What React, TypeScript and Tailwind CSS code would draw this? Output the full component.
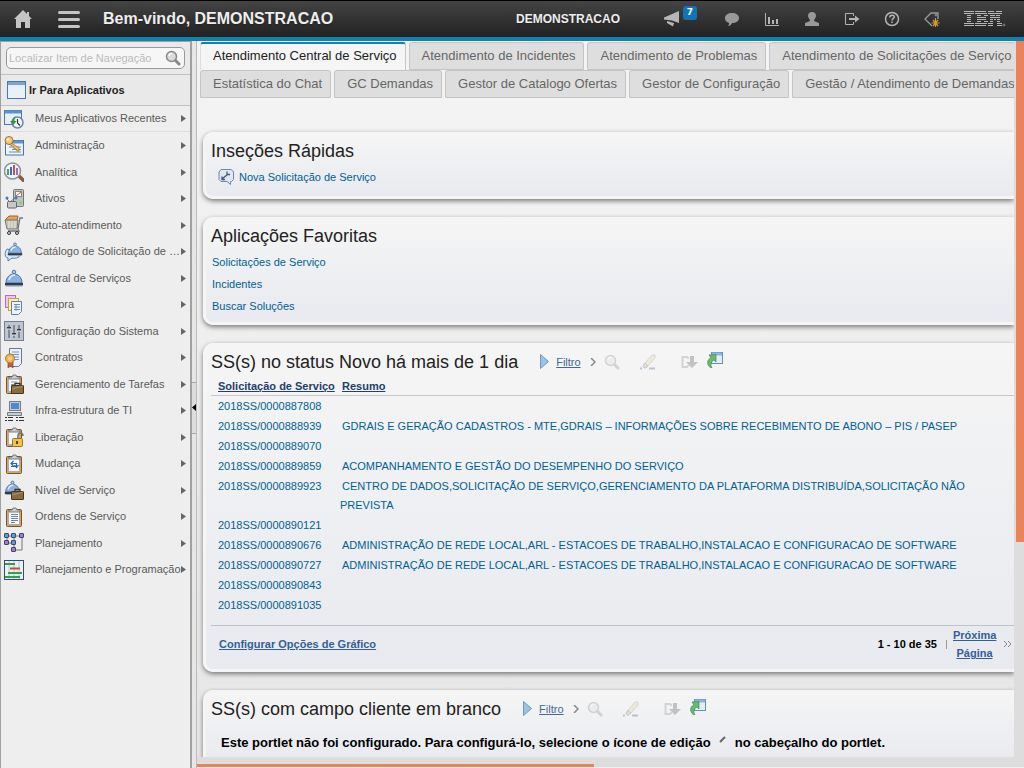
import React, { useState } from "react";

const navItems = [
  { icon: "recent", label: "Meus Aplicativos Recentes" },
  { icon: "admin", label: "Administração" },
  { icon: "analytics", label: "Analítica" },
  { icon: "assets", label: "Ativos" },
  { icon: "cart", label: "Auto-atendimento" },
  { icon: "catalog", label: "Catálogo de Solicitação de …" },
  { icon: "bell", label: "Central de Serviços" },
  { icon: "purchase", label: "Compra" },
  { icon: "config", label: "Configuração do Sistema" },
  { icon: "contract", label: "Contratos" },
  { icon: "tasks", label: "Gerenciamento de Tarefas" },
  { icon: "infra", label: "Infra-estrutura de TI" },
  { icon: "release", label: "Liberação" },
  { icon: "change", label: "Mudança" },
  { icon: "level", label: "Nível de Serviço" },
  { icon: "orders", label: "Ordens de Serviço" },
  { icon: "planning", label: "Planejamento" },
  { icon: "schedule", label: "Planejamento e Programação" },
];

const tabRows = [
  [
    "Atendimento Central de Serviço",
    "Atendimento de Incidentes",
    "Atendimento de Problemas",
    "Atendimento de Solicitações de Serviço",
  ],
  [
    "Estatística do Chat",
    "GC Demandas",
    "Gestor de Catalogo Ofertas",
    "Gestor de Configuração",
    "Gestão / Atendimento de Demandas",
  ],
];

const requests = [
  { id: "2018SS/0000887808", resumo: "" },
  {
    id: "2018SS/0000888939",
    resumo:
      "GDRAIS E GERAÇÃO CADASTROS - MTE,GDRAIS – INFORMAÇÕES SOBRE RECEBIMENTO DE ABONO – PIS / PASEP",
  },
  { id: "2018SS/0000889070", resumo: "" },
  {
    id: "2018SS/0000889859",
    resumo: "ACOMPANHAMENTO E GESTÃO DO DESEMPENHO DO SERVIÇO",
  },
  {
    id: "2018SS/0000889923",
    resumo:
      "CENTRO DE DADOS,SOLICITAÇÃO DE SERVIÇO,GERENCIAMENTO DA PLATAFORMA DISTRIBUÍDA,SOLICITAÇÃO NÃO PREVISTA",
  },
  { id: "2018SS/0000890121", resumo: "" },
  {
    id: "2018SS/0000890676",
    resumo:
      "ADMINISTRAÇÃO DE REDE LOCAL,ARL - ESTACOES DE TRABALHO,INSTALACAO E CONFIGURACAO DE SOFTWARE",
  },
  {
    id: "2018SS/0000890727",
    resumo:
      "ADMINISTRAÇÃO DE REDE LOCAL,ARL - ESTACOES DE TRABALHO,INSTALACAO E CONFIGURACAO DE SOFTWARE",
  },
  { id: "2018SS/0000890843", resumo: "" },
  { id: "2018SS/0000891035", resumo: "" },
];

// shared pieces of the sidebar icons
const clipboard = (
  <>
    <rect x="2.5" y="2.5" width="15" height="17" rx="1" fill="#d9a35c" stroke="#7b5326" />
    <rect x="4.5" y="4.5" width="11" height="13" fill="#f4f7fb" stroke="#a8adb8" />
    <path d="M5 5V3h3l1-2h3l1 2h3v2z" fill="#c9ccd0" stroke="#666" strokeWidth="0.8" />
  </>
);
const briefcase = (
  <>
    <path d="M11 12V9.500h5V12" fill="none" stroke="#3f2f1c" strokeWidth="1.3" />
    <rect x="7.500" y="11.500" width="12" height="8" rx="0.500" fill="#8b6b41" stroke="#49351c" />
    <path d="M8 15l11-3" stroke="#b39465" />
  </>
);
const bell = (
  <>
    <circle cx="10" cy="3" r="1.800" fill="#aac7ec" stroke="#3d5e96" strokeWidth="0.800" />
    <path d="M2 14c0-12 16-12 16 0z" fill="#8bb2e0" stroke="#4a6ea5" />
    <path d="M5 11c1-4 3-5 6-5" stroke="#e6f1fd" strokeWidth="1.600" fill="none" />
    <path d="M1 14h18v2.500H1z" fill="#323c49" />
    <path d="M2 17h16" stroke="#8794a8" />
  </>
);

const navIcons: Record<string, React.ReactNode> = {
  recent: (
    <>
      <rect x="0.5" y="1.5" width="17" height="14" fill="#e6effa" stroke="#4f78b4" />
      <path d="M1 3h16" stroke="#5d92d2" strokeWidth="3" />
      <circle cx="13.500" cy="13.500" r="5.500" fill="#f3f7fb" stroke="#6c88ae" strokeWidth="1.500" />
      <path d="M13.500 10v4l2.500 2.500" fill="none" stroke="#333" strokeWidth="1.200" />
      <path d="M12 7c-3 1-3.500 3-3.500 5H6l3.500 4 3-4h-2c0-2 0-3 1.500-5z" fill="#2c9a3d" />
    </>
  ),
  admin: (
    <>
      <rect x="1.500" y="4.500" width="18" height="14.500" fill="#edf3fb" stroke="#4a74ad" />
      <path d="M2 6h17" stroke="#5f92d0" strokeWidth="3" />
      <path d="M5 11h12M8 13.500h9M5 16h12" stroke="#6d8fbd" />
      <path d="M6 6l9 6 0 3-2 0-1-2-2-.5-.5-2-4-2z" fill="#f2bf62" stroke="#a5712a" strokeWidth="0.800" />
      <circle cx="5" cy="4.500" r="4" fill="#f4c873" stroke="#a5712a" />
      <circle cx="4" cy="3.500" r="1.200" fill="#fff" />
    </>
  ),
  analytics: (
    <>
      <path d="M15 14l5 5" stroke="#8b5b3c" strokeWidth="3.500" strokeLinecap="round" />
      <circle cx="8.500" cy="9" r="8" fill="#edf5fd" stroke="#8b919b" strokeWidth="1.500" />
      <path d="M4 7v6" stroke="#48a06b" strokeWidth="2" />
      <path d="M7 5v8" stroke="#4a64b5" strokeWidth="2" />
      <path d="M10 3v10" stroke="#c34e61" strokeWidth="2" />
      <path d="M13 6v7" stroke="#a36dcc" strokeWidth="2" />
    </>
  ),
  assets: (
    <>
      <rect x="9.500" y="0.500" width="10" height="17" rx="1" fill="#bfc2c4" stroke="#777" />
      <rect x="11.500" y="2.500" width="6" height="5" fill="#f7f7f7" stroke="#888" />
      <path d="M12 7l5-4" stroke="#d04f43" />
      <circle cx="16.500" cy="13.500" r="1.500" fill="#79d65b" />
      <path d="M2 9l4 4 6-5" fill="none" stroke="#777" />
      <circle cx="3" cy="9" r="1.500" fill="#3b79cc" />
      <circle cx="12" cy="9" r="1.500" fill="#3b79cc" />
      <rect x="3.500" y="12.500" width="9" height="6.500" rx="1" fill="#c8c8c8" stroke="#666" />
    </>
  ),
  cart: (
    <>
      <path d="M2 4l3-3h9l-1 5H2z" fill="#e5a65b" stroke="#9b642a" />
      <path d="M1 5h13l-1 9H3z" fill="#c5c3b9" stroke="#77756c" />
      <path d="M5 6v7M8 6v7M11 6v7" stroke="#eeeade" />
      <path d="M19 3h-3l-2 11 1 2H4" fill="none" stroke="#6f7580" strokeWidth="1.300" />
      <circle cx="5" cy="18" r="1.500" fill="#ddd" stroke="#333" />
      <circle cx="13" cy="18" r="1.500" fill="#ddd" stroke="#333" />
    </>
  ),
  catalog: (
    <>
      <path d="M3 7c-3 4-2 9 1 9v3l4-3c4 1 9-1 9-5z" fill="#dbe9fa" stroke="#5d7fae" />
      <g transform="translate(3 0) scale(0.800)">{bell}</g>
    </>
  ),
  bell: <g transform="translate(0 1)">{bell}</g>,
  purchase: (
    <>
      <rect x="1.500" y="0.500" width="10" height="12" fill="#eac7f1" stroke="#b76cc5" />
      <rect x="4.500" y="3.500" width="10" height="12" fill="#fcefb4" stroke="#c9a339" />
      <path d="M7.500 6.500h10v10l-3 3h-7z" fill="#edf4fd" stroke="#617fa8" />
      <path d="M10 9.500h6M10 12h6M10 14.500h6M12 9v7" stroke="#718eb6" />
    </>
  ),
  config: (
    <>
      <rect x="0.500" y="0.500" width="19" height="19" fill="#bfc6d2" stroke="#737e90" />
      <path d="M5 4v13M10 4v13M15 4v13" stroke="#444d59" />
      <path d="M3 7h4M8 13h4M13 9h4" stroke="#303845" strokeWidth="2" />
      <path d="M3 8h4M8 14h4M13 10h4" stroke="#e7ebf2" />
    </>
  ),
  contract: (
    <>
      <path d="M5.500.5h12v15l-3 3h-9z" fill="#eaf1fb" stroke="#6179a2" />
      <path d="M8 4h7M8 6.500h7M10 9h5M11 11.500h4" stroke="#7d94b8" />
      <path d="M4 13v7l2.500-2L9 20v-7z" fill="#bd6045" stroke="#8c3f2b" strokeWidth="0.700" />
      <circle cx="6" cy="10.500" r="4.500" fill="#f0b553" stroke="#ad7523" />
      <circle cx="6" cy="10.500" r="2" fill="#f9d68c" />
    </>
  ),
  tasks: (
    <>
      {clipboard}
      <path d="M7 8h6M7 10.500h4" stroke="#8090a5" />
      {briefcase}
    </>
  ),
  infra: (
    <>
      <rect x="5.500" y="0.500" width="11" height="9" fill="#c7ccd2" stroke="#727a86" />
      <rect x="7" y="2" width="8" height="6" fill="#4989d8" />
      <path d="M3.500 11.500h14v3h-14z" fill="#c9cdd2" stroke="#727a86" />
      <path d="M1 16.500h2M4 16.500h5M12 16.500h2M15 16.500h5M1 19.500h2M4 19.500h5M12 19.500h2M15 19.500h5" stroke="#333" />
    </>
  ),
  release: (
    <>
      {clipboard}
      <path d="M14 12V9c0-4 5-4 5 0" fill="none" stroke="#777" strokeWidth="1.600" />
      <rect x="8.500" y="11.500" width="10" height="8" rx="1" fill="#f1c44d" stroke="#9d731b" />
      <path d="M13 14v3" stroke="#58400f" strokeWidth="2" />
    </>
  ),
  change: (
    <>
      {clipboard}
      <path d="M12.500 14V9.500h-5M9.500 7L7 9.500 9.500 12M7 12.500h4M10.500 11l2 2.500 2-2.500" fill="none" stroke="#28679e" strokeWidth="1.200" />
    </>
  ),
  level: (
    <>
      <g transform="scale(0.850)">{bell}</g>
      {briefcase}
    </>
  ),
  orders: (
    <>
      {clipboard}
      <path d="M7 7.500h7M7 9.500h7M7 11.500h7M7 13.500h7M7 15.500h4" stroke="#74849d" />
    </>
  ),
  planning: (
    <>
      <path d="M3 3h15v14h-8V3M3 3v7h7" fill="none" stroke="#777" />
      {[
        [0.500, 0.500, "#54a0d7"],
        [7.500, 0.500, "#54a0d7"],
        [15.500, 0.500, "#ad74d0"],
        [0.500, 7.500, "#ad74d0"],
        [7.500, 7.500, "#54a0d7"],
        [7.500, 14.500, "#ad74d0"],
      ].map(([x, y, c], i) => (
        <rect key={i} x={x} y={y} width="4" height="4" rx="0.500" fill={String(c)} stroke="#3f4670" />
      ))}
    </>
  ),
  schedule: (
    <>
      <rect x="0.500" y="0.500" width="19" height="19" fill="#eaf1f5" stroke="#334b76" />
      <path d="M5 1v18M10 1v18M15 1v18" stroke="#b8c6d2" />
      <path d="M1 4h10M4 13h14M1 17h15" stroke="#3d9a4d" strokeWidth="2" />
      <path d="M6 8.500h10" stroke="#c25035" strokeWidth="2" />
    </>
  ),
};

// [row, start, width] of each stripe
const ibmStripes = [
  [0, 0, 10], [1, 0, 10], [2, 3, 4], [3, 3, 4], [4, 3, 4], [5, 3, 4], [6, 0, 10], [7, 0, 10],
  [0, 11, 11], [1, 11, 12], [2, 13, 4], [2, 20, 4], [3, 13, 9], [4, 13, 9], [5, 13, 4], [5, 20, 4], [6, 11, 12], [7, 11, 11],
  [0, 24, 6], [0, 32, 6], [1, 24, 7], [1, 31, 7], [2, 26, 5], [2, 32, 4], [3, 26, 10], [4, 26, 3], [4, 30, 2], [4, 33, 3],
  [5, 26, 3], [5, 33, 3], [6, 24, 5], [6, 33, 5], [7, 24, 5], [7, 33, 5],
];

function SearchIcon({ className }: { className: string }) {
  return (
    <svg className={className} viewBox="0 0 16 16" aria-hidden="true">
      <path d="M10 10l4 4" stroke="#888" strokeWidth="3" strokeLinecap="round" />
      <circle cx="6.500" cy="6.500" r="5" fill="#d9dcde" stroke="#888" strokeWidth="1.500" />
      <path d="M4 6c0-2 1-2.500 3-2.500" stroke="#fff" strokeWidth="1.200" fill="none" />
    </svg>
  );
}

function HeaderButton({ label, children }: { label: string; children: React.ReactNode }) {
  return (
    <button type="button" aria-label={label} className="flex w-10 justify-center">
      <svg className="h-4 w-4" viewBox="0 0 16 16" fill="none" stroke="#b5b5b5">
        {children}
      </svg>
    </button>
  );
}

function Header() {
  return (
    <header className="flex h-[41px] shrink-0 items-center border-t border-b-4 border-t-black border-b-[#0b83b8] bg-linear-to-b from-[#444] to-[#222] text-[#eee]">
      <button type="button" aria-label="Início" className="ml-3.5">
        <svg className="h-[18px] w-[18px]" viewBox="0 0 18 18" fill="#c4c4c4">
          <path d="M9 0L0 9h2v9h5v-6h4v6h5V9h2l-3-3V2h-2v2z" />
        </svg>
      </button>
      <button type="button" aria-label="Menu" className="ml-[26px] flex w-[22px] flex-col gap-1">
        <span className="h-[3px] rounded-sm bg-[#c4c4c4]" />
        <span className="h-[3px] rounded-sm bg-[#c4c4c4]" />
        <span className="h-[3px] rounded-sm bg-[#c4c4c4]" />
      </button>
      <h1 className="ml-[23px] text-[16px] font-bold text-shadow-sm">Bem-vindo, DEMONSTRACAO</h1>
      <span className="ml-auto text-[12px] font-bold text-shadow-sm">DEMONSTRACAO</span>
      <button type="button" aria-label="Avisos" className="relative mr-8 ml-11">
        <svg className="h-4 w-4" viewBox="0 0 16 16" fill="#b5b5b5">
          <path d="M15 0v12L8 9.500 0 8.500V6.500z" />
          <path d="M3 10l7 2-1 3.500L3 12z" />
        </svg>
        <span className="absolute -top-[5px] left-[19px] flex h-[14px] w-[14px] items-center justify-center rounded-[3px] bg-[#1273b5] font-['DejaVu_Sans'] text-[9px] font-bold text-white">
          7
        </span>
      </button>
      <HeaderButton label="Chat">
        <path d="M8 2c4 0 7 2 7 5s-3 5-7 5c-1 2-2 3-4 3 1-1 1-2 1-3-3-1-4-3-4-5 0-3 3-5 7-5z" fill="#999" stroke="none" />
      </HeaderButton>
      <HeaderButton label="Gráficos">
        <path d="M1.500 2v12.500H15" />
        <path d="M5 6v7M9 9v4M13 8v5" strokeWidth="2" />
      </HeaderButton>
      <HeaderButton label="Perfil">
        <path d="M8 1c3 0 4 2 4 4 0 2-2 3-2 5l5 2v3H1v-3l5-2c0-2-2-3-2-5 0-2 1-4 4-4z" fill="#999" stroke="none" />
      </HeaderButton>
      <HeaderButton label="Sair">
        <path d="M9.500 5V2.500h-8v11h8V11" />
        <path d="M5 8h7" strokeWidth="2" />
        <path d="M11 4.500L15.500 8 11 11.500z" fill="#b5b5b5" stroke="none" />
      </HeaderButton>
      <HeaderButton label="Ajuda">
        <circle cx="8" cy="8" r="6.500" strokeWidth="1.500" />
        <path d="M5.800 6.500c0-3 4.500-3 4.500-.5 0 1.500-2.300 1.500-2.300 3.500M8 10.500v1.500" strokeWidth="1.500" />
      </HeaderButton>
      <HeaderButton label="Etiquetas">
        <path d="M8 15L1 8l6-6h7v6" stroke="#999" strokeWidth="1.300" />
        <circle cx="12" cy="4" r="1" stroke="#999" />
        <path d="M11.500 7v9M7.500 12h8M9 9l5 6M14 9l-5 6" stroke="#d39a2c" strokeWidth="1.200" />
      </HeaderButton>
      <svg className="mr-[18px] ml-3 h-4 w-[42px]" viewBox="0 0 42 16" fill="#b5b5b5" role="img" aria-label="IBM">
        {ibmStripes.map(([row, x, w]) => (
          <rect key={`${row}-${x}`} x={x} y={row * 2} width={w} height="1" />
        ))}
        <circle cx="40" cy="14" r="1" fill="none" stroke="#999" strokeWidth="0.700" />
      </svg>
    </header>
  );
}

function Sidebar() {
  const [search, setSearch] = useState("");

  return (
    <aside className="w-[192px] shrink-0 border-t border-r-2 border-l border-[#a0a0a0] bg-[#eee]">
      <div className="flex h-8 items-center bg-[#e9e9e9] px-[5px]">
        <label className="flex h-[22px] w-full items-center rounded-[5px] border border-[#999] bg-[#f6f6f6] pr-[3px] pl-[2px]">
          <input
            aria-label="Localizar Item de Navegação"
            className="min-w-0 flex-1 bg-transparent text-[11px] outline-none placeholder:text-[#bbb]"
            placeholder="Localizar Item de Navegação"
            value={search}
            onChange={(e) => setSearch(e.target.value)}
          />
          <SearchIcon className="h-4 w-4" />
        </label>
      </div>
      <button
        type="button"
        className="flex h-8 w-full items-center gap-[3px] border-y border-[#c2c2c2] bg-[#e9e9e9] pl-[6px] text-[11px] font-bold text-[#222]"
      >
        <svg className="h-[18px] w-[19px]" viewBox="0 0 19 18">
          <rect x="0.500" y="0.500" width="18" height="17" fill="#e8f0f9" stroke="#4c76ae" />
          <path d="M1 2.500h17" stroke="#75a7df" strokeWidth="3" />
        </svg>
        Ir Para Aplicativos
      </button>
      <ul>
        {navItems.map((item) => (
          <li
            key={item.icon}
            className="first:border-b first:border-[#ddd] odd:h-[26px] even:h-[27px]"
          >
            <button
              type="button"
              className="flex h-full w-full items-center pr-[4px] pl-[3px] text-left text-[11px] whitespace-nowrap text-[#5a5a5a]"
            >
              <svg className="mr-[11px] h-5 w-5 shrink-0" viewBox="0 0 20 20" aria-hidden="true">
                {navIcons[item.icon]}
              </svg>
              <span className="min-w-0 flex-1">{item.label}</span>
              <svg className="h-[7px] w-[5px] shrink-0" viewBox="0 0 5 7" fill="#666" aria-hidden="true">
                <path d="M0 0l5 3.500L0 7z" />
              </svg>
            </button>
          </li>
        ))}
      </ul>
    </aside>
  );
}

function Splitter() {
  return (
    <div className="flex w-[5px] shrink-0 items-center border-r border-[#bbb] bg-[#e6e6e6] pt-[6px]">
      <button
        type="button"
        aria-label="Recolher"
        className="flex h-[52px] w-full items-center border-y border-[#aaa] bg-[#ddd]"
      >
        <svg className="h-[7px] w-[4px]" viewBox="0 0 4 7">
          <path d="M4 0v7L0 3.500z" />
        </svg>
      </button>
    </div>
  );
}

function Tabs() {
  const [active, setActive] = useState(tabRows[0][0]);

  return (
    <nav className="ml-[3px] pt-px">
      {tabRows.map((row, i) => (
        <div key={i} className="flex gap-[3px] text-[13px] whitespace-nowrap">
          {row.map((tab) => (
            <button
              key={tab}
              type="button"
              onClick={() => setActive(tab)}
              className={
                tab === active
                  ? "h-7 shrink-0 rounded-t-[3px] border-t-2 border-r border-l border-t-[#0b83b8] border-r-[#c4c4c4] border-l-[#ddd] bg-[#f5f5f5] pr-2 pb-[2px] pl-3 text-[#222]"
                  : "h-7 shrink-0 rounded-t-[3px] border border-[#c4c4c4] bg-[#dedede] pr-2 pl-3 text-[#666]"
              }
            >
              {tab}
            </button>
          ))}
        </div>
      ))}
    </nav>
  );
}

function Portlet({
  title,
  tools,
  children,
}: {
  title: string;
  tools?: boolean;
  children: React.ReactNode;
}) {
  return (
    <section className="rounded-l-[10px] border-[3px] border-r-0 border-[#f5f5f5] bg-linear-to-b from-[#f5f5f5] to-[#e8eaef] pl-[5px] shadow-[0_2px_5px_#777]">
      <div className="flex h-[31px] items-center">
        <h2 className="pt-[2px] text-[18px] whitespace-nowrap text-[#222]">{title}</h2>
        {tools && <PortletTools />}
      </div>
      {children}
    </section>
  );
}

function PortletTools() {
  return (
    <div className="ml-[22px] flex items-center">
      <svg className="h-[15px] w-[9px]" viewBox="0 0 9 15">
        <path d="M.5.5l8 7-8 7z" fill="#9cc3e3" stroke="#6b98c5" />
      </svg>
      <a href="#" className="ml-[7px] pt-[2px] text-[11px] text-[#456797] underline">
        Filtro
      </a>
      <svg className="ml-[9px] h-2 w-[6px]" viewBox="0 0 6 8">
        <path d="M1 0l4 4-4 4" fill="none" stroke="#888" strokeWidth="1.500" />
      </svg>
      <button type="button" aria-label="Buscar" className="ml-2">
        <SearchIcon className="h-4 w-4 opacity-30" />
      </button>
      <button type="button" aria-label="Limpar" className="ml-5">
        <svg className="h-4 w-4 opacity-40" viewBox="0 0 16 16">
          <path d="M5 9l7-8h3v3l-7 8z" fill="#e9dca9" stroke="#999" strokeWidth="0.800" />
          <path d="M5 9l3 3-2 2H4l-1-2z" fill="#bbb" stroke="#888" />
          <path d="M0 14.500h2M9 14.500h6" stroke="#779" strokeWidth="2" />
        </svg>
      </button>
      <button type="button" aria-label="Baixar" className="ml-[25px]">
        <svg className="h-4 w-[17px]" viewBox="0 0 17 16">
          <path d="M7 3H1.500v10H7M7 3v2M7 11v2" fill="none" stroke="#d4d4d4" strokeWidth="2" />
          <path d="M9 2h4v6h4l-6 6-6-6h4z" fill="#c2c2c2" />
        </svg>
      </button>
      <button type="button" aria-label="Abrir" className="ml-[9px] -mt-1">
        <svg className="h-4 w-4" viewBox="0 0 16 16">
          <rect x="4.500" y="0.500" width="11" height="11" fill="#e4eef9" stroke="#668fc1" />
          <path d="M5 2h10" stroke="#8eb5df" strokeWidth="3" />
          <path d="M4 16c-5-3-4-9 0-10L2 3l7-.500V10L7 8c-3 1-4 5-2 8z" fill="#69b970" stroke="#3d9147" strokeWidth="0.700" />
        </svg>
      </button>
    </div>
  );
}

function RequestTable() {
  return (
    <table className="w-full border-separate border-spacing-0 text-left text-[11px]">
      <thead>
        <tr className="text-[#1f3f6f]">
          <th className="h-[19px] w-[129px] border-b border-[#c6c8ca] pl-[7px] leading-4 whitespace-nowrap">
            <a href="#" className="underline">Solicitação de Serviço</a>
          </th>
          <th className="h-[19px] border-b border-[#c6c8ca] pl-[2px] leading-4">
            <a href="#" className="underline">Resumo</a>
          </th>
        </tr>
      </thead>
      <tbody className="align-top leading-[19px] text-[#006099]">
        {requests.map((r) => (
          <tr key={r.id}>
            <td className="pt-px pl-[7px]">
              <a href="#">{r.id}</a>
            </td>
            <td className="pt-px indent-[2px]">{r.resumo}</td>
          </tr>
        ))}
      </tbody>
    </table>
  );
}

export default function App() {
  return (
    <div className="flex h-screen flex-col overflow-hidden bg-[#eee] font-['Liberation_Sans',Arial,sans-serif]">
      <Header />
      <div className="flex min-h-0 flex-1">
        <Sidebar />
        <Splitter />
        <div className="flex min-w-0 flex-1 flex-col">
          <div className="flex min-h-0 flex-1">
            <main className="min-w-0 flex-1 overflow-hidden bg-linear-to-b from-[#f4f4f4] to-[#e6e6e6]">
              <Tabs />
              <div className="mt-[34px] ml-[6px] flex flex-col gap-[18px]">
                <Portlet title="Inseções Rápidas">
                  <div className="mb-2 flex h-[22px] items-center gap-[5px] pl-[7px]">
                    <svg className="h-4 w-4" viewBox="0 0 16 16" aria-hidden="true">
                      <path d="M3 .5h10l2.500 2v8l-2 2h-1v3l-3.500-3H3l-2-2V3z" fill="#dfe7f3" stroke="#7386a7" />
                      <path d="M4 10l6-5M9 2.500v3h3M4 7.500v3h3" fill="none" stroke="#40577e" strokeWidth="1.300" />
                    </svg>
                    <a href="#" className="text-[11px] text-[#006099]">Nova Solicitação de Serviço</a>
                  </div>
                </Portlet>

                <Portlet title="Aplicações Favoritas">
                  <ul className="mb-[5px] pl-px text-[11px] leading-[22px] text-[#006099]">
                    <li><a href="#">Solicitações de Serviço</a></li>
                    <li><a href="#">Incidentes</a></li>
                    <li><a href="#">Buscar Soluções</a></li>
                  </ul>
                </Portlet>

                <Portlet title="SS(s) no status Novo há mais de 1 dia" tools>
                  <RequestTable />
                  <div className="mt-[10px] mb-[7px] flex items-center border-t border-[#c0c3c8] pr-[2px] pl-2 text-[11px] leading-[18px] font-bold">
                    <a href="#" className="text-[#33609a] underline">Configurar Opções de Gráfico</a>
                    <span className="ml-auto">1 - 10 de 35</span>
                    <span className="mr-[6px] ml-[9px] h-[9px] w-px bg-[#999]" />
                    <a href="#" className="w-[43px] text-center text-[#33609a] underline">Próxima Página</a>
                    <svg className="ml-2 h-[6px] w-2" viewBox="0 0 8 6">
                      <path d="M0 0l3 3-3 3M4 0l3 3-3 3" fill="none" stroke="#888" />
                    </svg>
                  </div>
                </Portlet>

                <Portlet title="SS(s) com campo cliente em branco" tools>
                  <p className="flex h-[38px] items-center pl-[10px] text-[13px] font-bold whitespace-nowrap">
                    Este portlet não foi configurado. Para configurá-lo, selecione o ícone de edição
                    <svg className="mx-2 mb-2 h-2 w-2" viewBox="0 0 8 8">
                      <path d="M1 7l5-5" stroke="#666" strokeWidth="2" />
                    </svg>
                    no cabeçalho do portlet.
                  </p>
                </Portlet>
              </div>
            </main>
            {/* vertical scroll bar */}
            <div className="w-[10px] shrink-0 bg-[#ddd] pl-[2px]">
              <div className="h-[70%] bg-[#e8835c]" />
            </div>
          </div>
          {/* horizontal scroll bar */}
          <div className="h-[11px] shrink-0 border-b border-[#f0f0f0] bg-[#ddd] pt-[7px]">
            <div className="h-[3px] w-[48%] bg-[#e8835c]" />
          </div>
        </div>
      </div>
    </div>
  );
}
